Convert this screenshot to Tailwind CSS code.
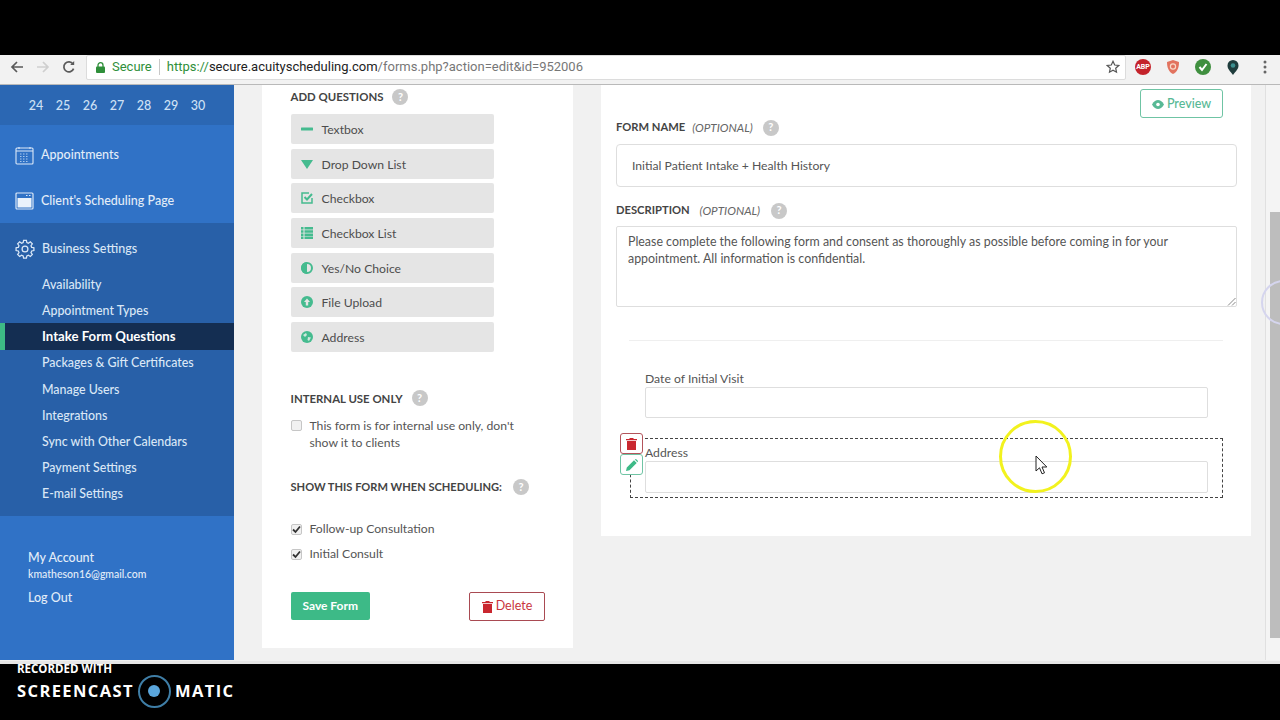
<!doctype html>
<html lang="en">
<head>
<meta charset="UTF-8">
<title>Intake Form Questions</title>
<script src="https://cdn.jsdelivr.net/npm/@tailwindcss/browser@4"></script>
</head>
<body class="bg-black font-['Lato',sans-serif] overflow-hidden">
<div class="relative w-[1280px] h-[720px] flex flex-col overflow-hidden">
    <!-- letterbox top -->
    <div class="h-[55px] bg-black shrink-0"></div>

    <!-- browser toolbar -->
    <header class="h-[30px] shrink-0 bg-[#f2f2f2] border-b border-[#b9b9b9] flex items-center pb-[5px] font-['Roboto',sans-serif]">
        <div class="w-[86px] flex items-center pl-[10px] gap-[11px] shrink-0">
            <svg class="size-[14px]" viewBox="0 0 14 14" fill="none" stroke="#5a5a5a" stroke-width="1.7"><path d="M13 7H2M7 2 2 7l5 5"/></svg>
            <svg class="size-[14px] ml-[1px]" viewBox="0 0 14 14" fill="none" stroke="#cfcfcf" stroke-width="1.7"><path d="M1 7h11M7 2l5 5-5 5"/></svg>
            <svg class="size-[14px] ml-[1px]" viewBox="0 0 14 14" fill="none" stroke="#5a5a5a" stroke-width="1.7"><path d="M11.6 8.6A5 5 0 1 1 11 4"/><path d="M12.2 1v4h-4" fill="#5a5a5a" stroke="none"/></svg>
        </div>
        <div class="w-[1040px] h-[25px] bg-white rounded-[2px] border border-[#dcdcdc] flex items-center pl-[9px] text-[13px] shrink-0">
            <svg class="w-[9px] h-[11px] mr-[7px]" viewBox="0 0 9 11"><path d="M2 5V3.2a2.5 2.5 0 0 1 5 0V5" fill="none" stroke="#2f8f3a" stroke-width="1.3"/><rect y="4.6" width="9" height="6.4" rx="1" fill="#2f8f3a"/></svg>
            <span class="text-[#2f8f3a]">Secure</span>
            <span class="w-px h-[16px] bg-[#c8c8c8] mx-[7px]"></span>
            <span class="text-[#2f8f3a]">https://</span><span class="text-[#222]">secure.acuityscheduling.com</span><span class="text-[#777]">/forms.php?action=edit&amp;id=952006</span>
            <svg class="size-[14px] ml-auto mr-[5px]" viewBox="0 0 14 14" fill="none" stroke="#555" stroke-width="1.2"><path d="m7 1.3 1.7 3.7 4 .5-3 2.7.8 4L7 10.2l-3.5 2 .8-4-3-2.7 4-.5Z"/></svg>
        </div>
        <div class="flex items-center pl-[9px] gap-[14px]">
            <span class="size-[16px] rounded-full bg-[#c4232b] text-white text-[7px] font-bold flex items-center justify-center">ABP</span>
            <svg class="size-[16px]" viewBox="0 0 16 16"><path d="M8 1 14 3c0 6-2 10-6 12C4 13 2 9 2 3Z" fill="#e2735f"/><circle cx="8" cy="7.5" r="2.6" fill="none" stroke="#f8d9c8" stroke-width="1.2"/></svg>
            <span class="size-[16px] rounded-full bg-[#3f8f3f] flex items-center justify-center"><svg class="size-[10px]" viewBox="0 0 10 10" fill="none" stroke="#fff" stroke-width="2"><path d="m1.5 5 2.5 3 4.500-6"/></svg></span>
            <svg class="size-[16px]" viewBox="0 0 16 16"><path d="M8 16C5 12 2.500 10 2.500 6.500a5.500 5.500 0 0 1 11 0C13.500 10 11 12 8 16Z" fill="#1f3d3d"/><circle cx="8" cy="6.500" r="2.300" fill="#3c8f8f"/></svg>
            <svg class="w-[4px] h-[14px] ml-[8px]" viewBox="0 0 4 14" fill="#666"><circle cx="2" cy="2" r="1.500"/><circle cx="2" cy="7" r="1.500"/><circle cx="2" cy="12" r="1.500"/></svg>
        </div>
    </header>

    <!-- page -->
    <main class="h-[579px] shrink-0 bg-[#f1f1f1] border-b-[3px] border-[#e6e6e6] flex overflow-hidden">
        <!-- sidebar -->
        <nav class="w-[234px] h-[575px] shrink-0 bg-[#3072c6] text-[#e3edf8] text-[12.500px] font-medium flex flex-col">
            <div class="h-[40px] bg-[#2b67b3] flex items-center pl-[22.500px] pt-[2px] text-[12.500px] text-center text-[#cfe1f5]">
                <span class="w-[27px]">24</span><span class="w-[27px]">25</span><span class="w-[27px]">26</span><span class="w-[27px]">27</span><span class="w-[27px]">28</span><span class="w-[27px]">29</span><span class="w-[27px]">30</span>
            </div>
            <a class="h-[46px] mt-[7px] flex items-center pl-[15px] gap-[7px]">
                <svg class="size-[19px]" viewBox="0 0 19 19" fill="none" stroke="#dbe8f7" stroke-width="1.1"><rect x="1" y="2" width="17" height="16" rx="1"/><path d="M4 1v2M15 1v2M1 5h17"/><path d="M5 8h9M5 10.500h9M5 13h9M5 15.500h9" stroke-dasharray="1.500 1.500" stroke="#a9c8ec"/></svg>
                <span>Appointments</span>
            </a>
            <a class="h-[45px] pt-[1px] flex items-center pl-[15px] gap-[7px]">
                <svg class="size-[19px] -mt-[1px]" viewBox="0 0 19 19"><rect x="1" y="2" width="17" height="16" rx="1" fill="none" stroke="#dbe8f7" stroke-width="1.2"/><path d="M2.500 7h14v9.500h-14Z" fill="#eaf2fb"/><path d="M11 4.500h1.500M14 4.500h1.500" stroke="#dbe8f7"/></svg>
                <span>Client's Scheduling Page</span>
            </a>
            <div class="h-[293px] bg-[#2860a8] flex flex-col text-[#dae7f6]">
                <a class="h-[50px] pt-[3px] flex items-center pl-[15px] gap-[7px]">
                    <svg class="size-[20px] -mt-[1px]" viewBox="0 0 24 24" fill="none" stroke="#dbe8f7" stroke-width="1.500"><path d="M10.300 2.500h3.400l.5 2.700 1.900.8 2.300-1.600 2.400 2.400-1.600 2.300.8 1.900 2.700.5v3.400l-2.700.5-.8 1.900 1.600 2.300-2.400 2.400-2.300-1.600-1.900.8-.5 2.700h-3.400l-.5-2.700-1.900-.8-2.300 1.600-2.400-2.400 1.600-2.300-.8-1.900-2.700-.5v-3.400l2.700-.5.800-1.900-1.600-2.300 2.400-2.400 2.300 1.600 1.900-.8Z" transform="translate(0 -1)"/><circle cx="12" cy="12" r="3.500"/></svg>
                    <span>Business Settings</span>
                </a>
                <div class="flex flex-col text-[12.400px] -mt-[2px]">
                    <a class="h-[26.200px] flex items-center pl-[42px] pt-[2px]">Availability</a>
                    <a class="h-[26.200px] flex items-center pl-[42px] pt-[2px]">Appointment Types</a>
                    <a class="h-[26.200px] flex items-center pl-[37px] bg-[#142e52] border-l-[5px] border-[#3dbb85] text-white text-[13.200px] font-bold">Intake Form Questions</a>
                    <a class="h-[26.200px] flex items-center pl-[42px] pt-[2px]">Packages &amp; Gift Certificates</a>
                    <a class="h-[26.200px] flex items-center pl-[42px] pt-[2px]">Manage Users</a>
                    <a class="h-[26.200px] flex items-center pl-[42px] pt-[2px]">Integrations</a>
                    <a class="h-[26.200px] flex items-center pl-[42px] pt-[2px]">Sync with Other Calendars</a>
                    <a class="h-[26.200px] flex items-center pl-[42px] pt-[1px]">Payment Settings</a>
                    <a class="h-[26.200px] flex items-center pl-[42px] pt-[1px]">E-mail Settings</a>
                </div>
            </div>
            <div class="pl-[28px] pt-[34px] text-[12.500px]">
                <div class="leading-[16px]">My Account</div>
                <div class="text-[10.500px] font-medium leading-[16px]">kmatheson16@gmail.com</div>
                <div class="leading-[16px] mt-[8px]">Log Out</div>
            </div>
        </nav>

        <!-- left form column -->
        <section class="w-[311px] h-[563px] ml-[28px] shrink-0 bg-white pl-[28.500px] text-[12.200px] text-[#555]">
            <h3 class="h-[29px] pb-[5px] flex items-center gap-[9px] font-bold text-[11.400px] text-[#444]">ADD QUESTIONS <span class="size-[16px] rounded-full bg-[#c8c8c8] text-white text-[11px] flex items-center justify-center font-bold">?</span></h3>
            <ul class="w-[203px] flex flex-col gap-[4.700px] text-[#4d4d4d]">
                <li class="h-[30px] pt-[2px] bg-[#e5e5e5] rounded-[2px] flex items-center pl-[10px] gap-[9px]">
                    <svg class="size-[12px] -mt-[2px]" viewBox="0 0 12 12"><rect y="4.500" width="12" height="3" rx=".5" fill="#45bb8f"/></svg>Textbox</li>
                <li class="h-[30px] pt-[2px] bg-[#e5e5e5] rounded-[2px] flex items-center pl-[10px] gap-[9px]">
                    <svg class="size-[12px] -mt-[2px]" viewBox="0 0 12 12"><path d="M0 2h12L6 11Z" fill="#45bb8f"/></svg>Drop Down List</li>
                <li class="h-[30px] pt-[2px] bg-[#e5e5e5] rounded-[2px] flex items-center pl-[10px] gap-[9px]">
                    <svg class="size-[12px] -mt-[2px]" viewBox="0 0 12 12" fill="none" stroke="#45bb8f"><path d="M11 6v5H1V1h7" stroke-width="1.500"/><path d="m3.500 5 2.500 2.500L11 2" stroke-width="2"/></svg>Checkbox</li>
                <li class="h-[30px] pt-[2px] bg-[#e5e5e5] rounded-[2px] flex items-center pl-[10px] gap-[9px]">
                    <svg class="size-[12px] -mt-[2px]" viewBox="0 0 12 12" fill="#45bb8f"><path d="M0 0h2.500v2.500H0ZM3.500 0H12v2.500H3.500ZM0 3.200h2.500v2.500H0ZM3.500 3.200H12v2.500H3.500ZM0 6.400h2.500v2.500H0ZM3.500 6.400H12v2.500H3.500ZM0 9.600h2.500V12H0ZM3.500 9.600H12V12H3.500Z"/></svg>Checkbox List</li>
                <li class="h-[30px] pt-[2px] bg-[#e5e5e5] rounded-[2px] flex items-center pl-[10px] gap-[9px]">
                    <svg class="size-[12px] -mt-[2px]" viewBox="0 0 12 12"><circle cx="6" cy="6" r="5" fill="none" stroke="#45bb8f" stroke-width="2"/><path d="M6 0a6 6 0 0 0 0 12Z" fill="#45bb8f"/></svg>Yes/No Choice</li>
                <li class="h-[30px] pt-[2px] bg-[#e5e5e5] rounded-[2px] flex items-center pl-[10px] gap-[9px]">
                    <svg class="size-[12px] -mt-[2px]" viewBox="0 0 12 12"><circle cx="6" cy="6" r="6" fill="#45bb8f"/><path d="M6 2.500 9 6H7.200v3.500H4.800V6H3Z" fill="#e5e5e5"/></svg>File Upload</li>
                <li class="h-[30px] pt-[2px] bg-[#e5e5e5] rounded-[2px] flex items-center pl-[10px] gap-[9px]">
                    <svg class="size-[12px] -mt-[2px]" viewBox="0 0 12 12"><circle cx="6" cy="6" r="6" fill="#45bb8f"/><path d="M2 4l3-2 1 2-2 2Zm5 2 3 .5-2 3.500-1.500-1Z" fill="#cfe8dd"/></svg>Address</li>
            </ul>
            <h3 class="mt-[38px] h-[16px] flex items-center gap-[9px] font-bold text-[11.400px] text-[#444]">INTERNAL USE ONLY <span class="size-[16px] rounded-full bg-[#c8c8c8] text-white text-[11px] flex items-center justify-center font-bold">?</span></h3>
            <label class="mt-[11px] flex gap-[8px] leading-[17px] w-[240px]">
                <span class="size-[11px] mt-[3px] shrink-0 rounded-[2px] border border-[#c6c6c6] bg-[#f1f1f1]"></span>
                <span>This form is for internal use only, don't show it to clients</span>
            </label>
            <h3 class="mt-[28px] h-[16px] flex items-center gap-[10px] font-bold text-[11.100px] text-[#444]">SHOW THIS FORM WHEN SCHEDULING: <span class="size-[16px] ml-[1px] rounded-full bg-[#c8c8c8] text-white text-[11px] flex items-center justify-center font-bold">?</span></h3>
            <label class="mt-[26px] h-[17px] flex items-center gap-[8px]">
                <span class="size-[11px] rounded-[2px] border border-[#c6c6c6] bg-[#f1f1f1] flex items-center justify-center"><svg class="size-[9px]" viewBox="0 0 9 9" fill="none" stroke="#333" stroke-width="1.800"><path d="m1 4.500 2.500 2.500L8 1.500"/></svg></span>
                Follow-up Consultation
            </label>
            <label class="mt-[8px] h-[17px] flex items-center gap-[8px]">
                <span class="size-[11px] rounded-[2px] border border-[#c6c6c6] bg-[#f1f1f1] flex items-center justify-center"><svg class="size-[9px]" viewBox="0 0 9 9" fill="none" stroke="#333" stroke-width="1.800"><path d="m1 4.500 2.500 2.500L8 1.500"/></svg></span>
                Initial Consult
            </label>
            <div class="mt-[29px] w-[254.500px] flex justify-between items-start">
                <button class="w-[79.500px] h-[28px] rounded-[2px] bg-[#3dba87] text-white font-bold text-[12px]">Save Form</button>
                <button class="w-[76px] h-[29px] rounded-[2px] border border-[#a94a52] bg-white text-[#c9353d] flex items-center justify-center gap-[3px] text-[12.500px]">
                    <svg class="w-[11px] h-[12px]" viewBox="0 0 11 12" fill="#c9272f"><path d="M1 3h9v9H1ZM0 1h3.500V0h4v1H11v1.300H0Z"/></svg>Delete
                </button>
            </div>
        </section>

        <!-- right form column -->
        <section class="w-[650px] h-[451px] ml-[28px] shrink-0 bg-white pl-[15px] pr-[14px] text-[#555]">
            <div class="flex justify-end pr-[14px] pt-[4px]">
                <button class="w-[83px] h-[29px] pt-[2px] rounded-[3px] border border-[#6fc4a4] text-[#58b995] text-[12.500px] font-medium flex items-center justify-center gap-[3px]">
                    <svg class="w-[12px] h-[9px]" viewBox="0 0 12 9"><path d="M0 4.500C2 1 4 0 6 0s4 1 6 4.500C10 8 8 9 6 9S2 8 0 4.500Z" fill="#58b995"/><circle cx="6" cy="4.500" r="1.800" fill="#fff"/></svg>Preview
                </button>
            </div>
            <div class="mt-[1px] h-[17px] flex items-center gap-[7px] text-[11.200px]">
                <span class="font-bold text-[#444]">FORM NAME</span><em class="text-[#666] text-[11.700px]">(OPTIONAL)</em>
                <span class="size-[16px] ml-[3px] rounded-full bg-[#c8c8c8] text-white text-[11px] not-italic flex items-center justify-center font-bold">?</span>
            </div>
            <div class="mt-[8px] w-[621px] h-[43px] pt-[2px] rounded-[4px] border border-[#dedede] flex items-center pl-[15px] text-[12.200px]">Initial Patient Intake + Health History</div>
            <div class="mt-[15px] h-[17px] flex items-center gap-[8px] text-[11.200px]">
                <span class="font-bold text-[#444]">DESCRIPTION</span><em class="ml-[2px] text-[#666] text-[11.700px]">(OPTIONAL)</em>
                <span class="size-[16px] ml-[3px] rounded-full bg-[#c8c8c8] text-white text-[11px] flex items-center justify-center font-bold">?</span>
            </div>
            <div class="relative mt-[7px] w-[621px] h-[81px] rounded-[2px] border border-[#dedede] pl-[11px] pr-[50px] pt-[6px] text-[12.400px] leading-[17px]">
                Please complete the following form and consent as thoroughly as possible before coming in for your appointment. All information is confidential.
                <svg class="absolute right-0 bottom-0 size-[9px]" viewBox="0 0 9 9" stroke="#888"><path d="M1 8.500 8.500 1M5 8.500 8.500 5"/></svg>
            </div>
            <div class="mt-[33px] mx-[13px] w-[594px] border-t border-[#efefef]"></div>
            <div class="pl-[29px] mt-[29px]">
                <div class="text-[12.200px] h-[17px] leading-[17px]">Date of Initial Visit</div>
                <div class="w-[563px] h-[31px] rounded-[2px] border border-[#dedede]"></div>
            </div>
            <div class="relative mt-[20px] ml-[14px] w-[593px] h-[60px] border border-dashed border-[#444]">
                <div class="absolute -left-[11px] -top-[6px] w-[23px] h-[21px] rounded-[3px] border border-[#b3545b] bg-white flex items-center justify-center">
                    <svg class="w-[11px] h-[12px]" viewBox="0 0 11 12" fill="#c9272f"><path d="M1 3h9v9H1ZM0 1h3.500V0h4v1H11v1.300H0Z"/></svg>
                </div>
                <div class="absolute -left-[11px] top-[15px] w-[23px] h-[21px] rounded-[3px] border border-[#6fc4a4] bg-white flex items-center justify-center">
                    <svg class="size-[12px]" viewBox="0 0 12 12" fill="#3dba87"><path d="M0 12l.8-3.500L8 1.300 10.700 4 3.500 11.200ZM8.800.5 10 0l2 2-.5 1.200Z"/></svg>
                </div>
                <div class="pl-[14px] pt-[5px]">
                    <div class="text-[12.200px] h-[17px] leading-[17px]">Address</div>
                    <div class="w-[563px] h-[32px] rounded-[2px] border border-[#dedede]"></div>
                </div>
            </div>
        </section>

        <!-- scrollbar -->
        <div class="w-[15px] ml-[14px] shrink-0 h-[575px] bg-[#f4f4f4] border-l border-[#e0e0e0] pl-[4px] pt-[127px]">
            <div class="h-[426px] bg-[#bdbdbd]"></div>
        </div>
    </main>

    <!-- recorder watermark -->
    <footer class="flex-1 bg-black text-white font-['Open_Sans',sans-serif] font-bold pl-[17px]">
        <div class="text-[11.500px] leading-[9px]">RECORDED WITH</div>
        <div class="flex items-center mt-[1px] text-[16.500px] tracking-[1.400px] h-[34px]">
            <span>SCREENCAST</span>
            <span class="size-[33px] ml-[4px] mr-[4px] rounded-full border-2 border-[#3f7ea6] flex items-center justify-center"><span class="size-[12px] rounded-full bg-[#5aa6dc]"></span></span>
            <span>MATIC</span>
        </div>
    </footer>

    <!-- cursor highlight -->
    <div class="absolute left-[999px] top-[420px] size-[73px] rounded-full border-[3px] border-[#f2f21e]"></div>
    <svg class="absolute left-[1035px] top-[455px] w-[13px] h-[20px]" viewBox="0 0 13 20"><path d="M1 1v15l3.500-3.200 2.500 6 2.500-1-2.500-5.800h4.800Z" fill="#fff" stroke="#222" stroke-width="1"/></svg>
    <div class="absolute left-[1261px] top-[280px] size-[45px] rounded-full border-2 border-[#d5d5ee]"></div>
</div>
</body>
</html>
